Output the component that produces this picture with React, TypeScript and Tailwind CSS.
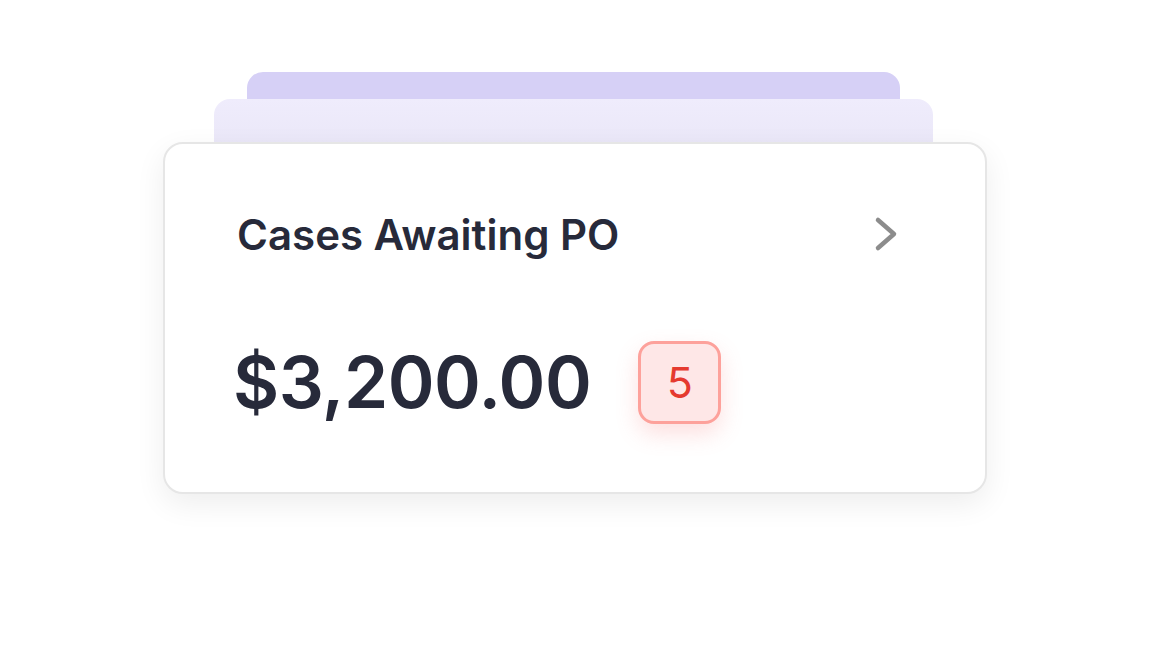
export default function App() {
  return (
    <div
      className="min-h-screen w-full bg-white"
      style={{ fontFamily: "Inter, 'Noto Sans', sans-serif" }}
    >
      <div className="ml-[163px] flex w-[824px] flex-col items-center pt-[72px]">
        {/* stacked cards behind */}
        <div className="-mb-[17px] h-[44px] w-[653px] -translate-x-[2px] rounded-t-[16px] bg-[#d6d0f6]" />
        <div className="-mb-[17px] h-[60px] w-[719px] -translate-x-[2px] rounded-t-[16px] bg-gradient-to-b from-[#efecfc] to-[#e9e6f7]" />

        {/* main card */}
        <div className="relative z-10 flex h-[352px] w-full flex-col rounded-[20px] border-2 border-[#e6e6e6] bg-white pl-[72px] pr-[87px] shadow-[0_10px_30px_rgba(0,0,0,0.07)]">
          <div className="mt-[70px] flex h-[40px] items-center justify-between">
            <h2 className="text-[42px] font-semibold text-[#272a3a]">
              Cases Awaiting PO
            </h2>
            <svg width="24" height="36" viewBox="0 0 24 36" fill="none">
              <polyline
                points="4,4 20,18 4,32"
                stroke="#8c8c8c"
                strokeWidth="4.5"
                strokeLinecap="round"
                strokeLinejoin="round"
              />
            </svg>
          </div>

          <div className="-ml-[4px] mt-[87px] flex items-center gap-[47px]">
            <span className="text-[71px] font-semibold leading-none tracking-[-0.5px] text-[#272a3a]">
              $3,200.00
            </span>
            <div className="flex h-[83px] w-[83px] items-center justify-center rounded-[16px] border-[3px] border-[#fda19b] bg-[#fee7e7] text-[43px] text-[#e53a2f] shadow-[0_10px_22px_rgba(248,113,113,0.22)]">
              5
            </div>
          </div>
        </div>
      </div>
    </div>
  );
}
